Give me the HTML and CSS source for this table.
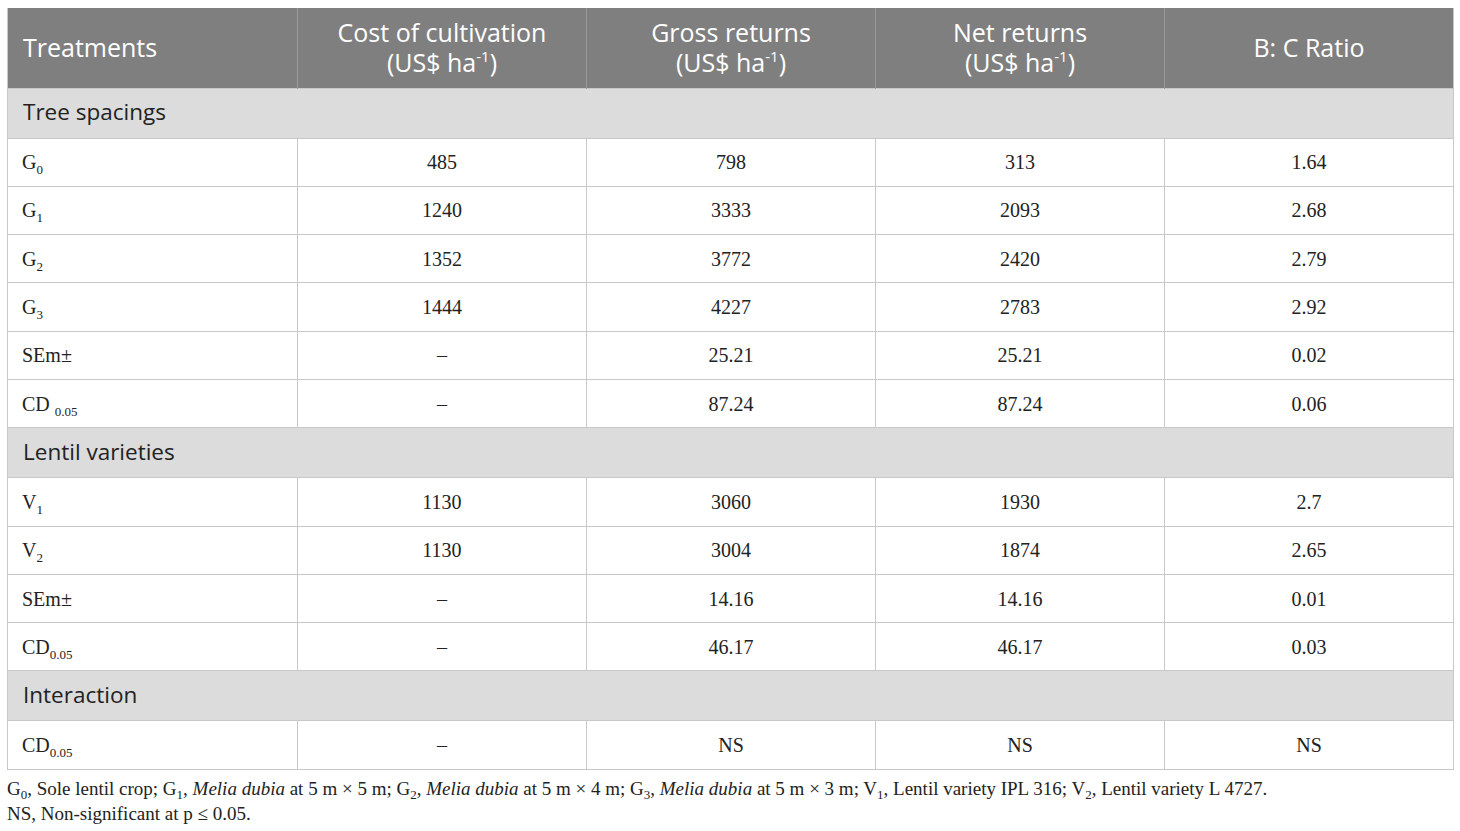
FILE: index.html
```html
<!DOCTYPE html>
<html>
<head>
<meta charset="utf-8">
<link rel="stylesheet" href="styles.css">
</head>
<body>
<div class="wrap">
<table class="tbl">
  <colgroup>
    <col class="c1"><col class="c"><col class="c"><col class="c"><col class="c">
  </colgroup>
  <thead>
    <tr>
      <th class="first">Treatments</th>
      <th>Cost of cultivation<br>(US$ ha<sup>-1</sup>)</th>
      <th>Gross returns<br>(US$ ha<sup>-1</sup>)</th>
      <th>Net returns<br>(US$ ha<sup>-1</sup>)</th>
      <th>B: C Ratio</th>
    </tr>
  </thead>
  <tbody>
    <tr class="sec"><td colspan="5">Tree spacings</td></tr>
    <tr><td>G<sub>0</sub></td><td>485</td><td>798</td><td>313</td><td>1.64</td></tr>
    <tr><td>G<sub>1</sub></td><td>1240</td><td>3333</td><td>2093</td><td>2.68</td></tr>
    <tr><td>G<sub>2</sub></td><td>1352</td><td>3772</td><td>2420</td><td>2.79</td></tr>
    <tr><td>G<sub>3</sub></td><td>1444</td><td>4227</td><td>2783</td><td>2.92</td></tr>
    <tr><td>SEm±</td><td>–</td><td>25.21</td><td>25.21</td><td>0.02</td></tr>
    <tr><td>CD <sub>0.05</sub></td><td>–</td><td>87.24</td><td>87.24</td><td>0.06</td></tr>
    <tr class="sec"><td colspan="5">Lentil varieties</td></tr>
    <tr><td>V<sub>1</sub></td><td>1130</td><td>3060</td><td>1930</td><td>2.7</td></tr>
    <tr><td>V<sub>2</sub></td><td>1130</td><td>3004</td><td>1874</td><td>2.65</td></tr>
    <tr><td>SEm±</td><td>–</td><td>14.16</td><td>14.16</td><td>0.01</td></tr>
    <tr><td>CD<sub>0.05</sub></td><td>–</td><td>46.17</td><td>46.17</td><td>0.03</td></tr>
    <tr class="sec"><td colspan="5">Interaction</td></tr>
    <tr><td>CD<sub>0.05</sub></td><td>–</td><td>NS</td><td>NS</td><td>NS</td></tr>
  </tbody>
</table>
<div class="notes">
  <p>G<sub>0</sub>, Sole lentil crop; G<sub>1</sub>, <i>Melia dubia</i> at 5 m × 5 m; G<sub>2</sub>, <i>Melia dubia</i> at 5 m × 4 m; G<sub>3</sub>, <i>Melia dubia</i> at 5 m × 3 m; V<sub>1</sub>, Lentil variety IPL 316; V<sub>2</sub>, Lentil variety L 4727.</p>
  <p>NS, Non-significant at p ≤ 0.05.</p>
</div>
</div>
</body>
</html>
```

FILE: styles.css
```css
html, body {
  margin: 0;
  padding: 0;
  background: #ffffff;
}
.wrap {
  padding: 8px 7px 0 7px;
}
.tbl {
  width: 1447px;
  border-collapse: collapse;
  table-layout: fixed;
  font-family: "Liberation Serif", "Times New Roman", serif;
  color: #222;
}
.c1 { width: 290px; }
.c { width: 289px; }
.tbl th {
  background: #7f7f7f;
  color: #ffffff;
  font-family: "Open Sans", "Lato", sans-serif;
  font-weight: 400;
  font-size: 25px;
  line-height: 30px;
  height: 80px;
  padding: 0 10px 2px;
  text-align: center;
  border-left: 1px solid #9a9a9a;
  box-sizing: border-box;
}
.tbl th.first {
  text-align: left;
  border-left: 1px solid #c8c8c8;
  padding-left: 15px;
}
.tbl th:last-child {
  border-right: 1px solid #c8c8c8;
}
.tbl th sup {
  font-size: 15px;
  line-height: 0;
  vertical-align: 10px;
}
.tbl td {
  border: 1px solid #c8c8c8;
  height: 48.3px;
  padding: 0 14px;
  text-align: center;
  font-size: 20px;
  line-height: 22px;
  box-sizing: border-box;
}
.tbl td:first-child {
  text-align: left;
}
.tbl td sub {
  font-size: 13px;
  line-height: 0;
  vertical-align: -5px;
}
.tbl tr.sec td {
  background: #dcdcdc;
  font-family: "Open Sans", "Lato", sans-serif;
  font-size: 22.5px;
  height: 50px;
  color: #222;
  text-align: left;
  padding-left: 15px;
  padding-bottom: 2px;
}
.notes {
  font-family: "Liberation Serif", "Times New Roman", serif;
  font-size: 19px;
  color: #222;
  padding-top: 6px;
}
.notes p {
  margin: 0;
  line-height: 25px;
}
.notes sub {
  font-size: 13px;
  line-height: 0;
  vertical-align: -4px;
}
```
